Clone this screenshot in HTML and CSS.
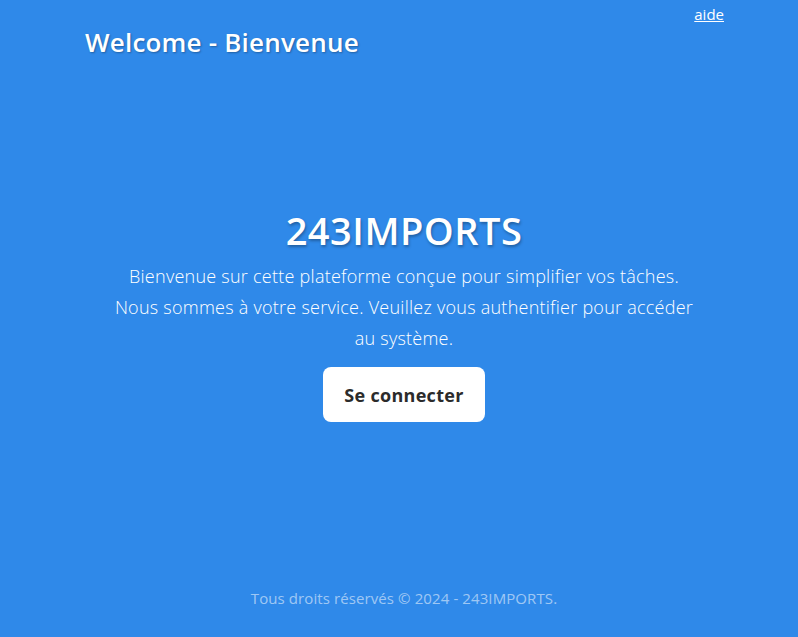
FILE: index.html
```html
<!DOCTYPE html>
<html lang="fr">
<head>
<meta charset="utf-8">
<title>243IMPORTS</title>
<link rel="stylesheet" href="styles.css">
</head>
<body>
<div class="page">
  <header class="header">
    <h1 class="brand">Welcome - Bienvenue</h1>
    <a class="help" href="#">aide</a>
  </header>
  <main class="hero">
    <h2 class="hero-title">243IMPORTS</h2>
    <p class="hero-text">Bienvenue sur cette plateforme conçue pour simplifier vos tâches. Nous sommes à votre service. Veuillez vous authentifier pour accéder au système.</p>
    <a class="btn" href="#">Se connecter</a>
  </main>
  <footer class="footer">Tous droits réservés © 2024 - 243IMPORTS.</footer>
</div>
</body>
</html>
```
FILE: styles.css
```css
html, body {
  margin: 0;
  padding: 0;
  height: 100%;
}
body {
  background: #2f89e9;
  color: #fff;
  font-family: "Open Sans", "Noto Sans", sans-serif;
}
.page {
  width: 640px;
  margin-left: 84px;
  height: 637px;
  display: flex;
  flex-direction: column;
}
.header {
  display: flex;
  justify-content: space-between;
  align-items: flex-start;
}
.brand {
  margin: 24px 0 0 1px;
  font-size: 26px;
  font-weight: 600;
  letter-spacing: 0.2px;
  text-shadow: 1px 1px 2px rgba(0,0,0,0.3);
}
.help {
  color: #fff;
  font-size: 15px;
  margin-top: 4px;
  text-decoration: underline;
}
.hero {
  display: flex;
  flex-direction: column;
  align-items: center;
  text-align: center;
  margin-top: 145px;
}
.hero-title {
  margin: 0;
  font-size: 38px;
  font-weight: 600;
  letter-spacing: 0.5px;
  text-shadow: 1px 2px 3px rgba(0,0,0,0.3);
  line-height: 50px;
}
.hero-text {
  margin: 6px 0 0;
  width: 592px;
  font-size: 18px;
  font-weight: 300;
  line-height: 31px;
  letter-spacing: 0.25px;
}
.btn {
  margin-top: 13px;
  width: 162px;
  height: 55px;
  box-sizing: border-box;
  display: flex;
  align-items: center;
  justify-content: center;
  background: #fff;
  color: #2b2b2b;
  border-radius: 8px;
  font-size: 18px;
  font-weight: 700;
  text-decoration: none;
  letter-spacing: 0.3px;
}
.footer {
  margin-top: auto;
  margin-bottom: 29px;
  text-align: center;
  font-size: 15px;
  color: rgba(255,255,255,0.55);
  letter-spacing: 0.1px;
}
```
